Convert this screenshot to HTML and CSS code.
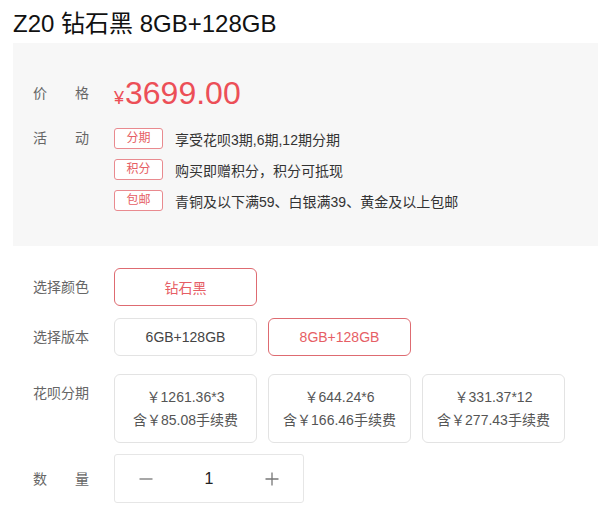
FILE: index.html
```html
<!DOCTYPE html>
<html lang="zh-CN">
<head>
  <meta charset="UTF-8" />
  <title>Z20 钻石黑 8GB+128GB</title>
  <meta name="viewport" content="width=device-width, initial-scale=1.0" />
  <link rel="stylesheet" href="styles.css">
</head>
<body>
  <div class="product">
    <h1 class="title">Z20 钻石黑 8GB+128GB</h1>

    <div class="summary">
      <div class="row price-row">
        <span class="label spread">价格</span>
        <span class="price"><em>¥</em>3699.00</span>
      </div>
      <div class="row promo-row">
        <span class="label spread">活动</span>
        <ul class="promos">
          <li><span class="tag">分期</span>享受花呗3期,6期,12期分期</li>
          <li><span class="tag">积分</span>购买即赠积分，积分可抵现</li>
          <li><span class="tag">包邮</span>青铜及以下满59、白银满39、黄金及以上包邮</li>
        </ul>
      </div>
    </div>

    <div class="options">
      <div class="row color-row">
        <span class="label">选择颜色</span>
        <div class="choices">
          <button class="choice active">钻石黑</button>
        </div>
      </div>
      <div class="row version-row">
        <span class="label">选择版本</span>
        <div class="choices">
          <button class="choice">6GB+128GB</button>
          <button class="choice active">8GB+128GB</button>
        </div>
      </div>
      <div class="row stage-row">
        <span class="label">花呗分期</span>
        <div class="choices">
          <button class="choice stage">
            <span>￥1261.36*3</span>
            <span>含￥85.08手续费</span>
          </button>
          <button class="choice stage">
            <span>￥644.24*6</span>
            <span>含￥166.46手续费</span>
          </button>
          <button class="choice stage">
            <span>￥331.37*12</span>
            <span>含￥277.43手续费</span>
          </button>
        </div>
      </div>
      <div class="row qty-row">
        <span class="label spread">数量</span>
        <div class="qty">
          <button class="qty-btn" aria-label="减少">
            <svg width="14" height="14" viewBox="0 0 14 14"><path d="M0.5 7h13" stroke="#777" stroke-width="1.3" fill="none"/></svg>
          </button>
          <span class="qty-value">1</span>
          <button class="qty-btn" aria-label="增加">
            <svg width="14" height="14" viewBox="0 0 14 14"><path d="M0.5 7h13M7 0.5v13" stroke="#777" stroke-width="1.3" fill="none"/></svg>
          </button>
        </div>
      </div>
    </div>
  </div>
</body>
</html>
```

FILE: styles.css
```css
body {
  margin: 0;
  padding: 0;
  background: #fff;
  font-family: "Liberation Sans", "Noto Sans CJK SC", sans-serif;
  color: #333;
}

.product {
  width: 616px;
}

.title {
  margin: 8px 0 3px 13px;
  font-size: 24px;
  line-height: 32px;
  font-weight: normal;
  color: #111;
}

.summary {
  margin-left: 13px;
  width: 585px;
  box-sizing: border-box;
  padding: 30px 20px 35px;
  background: #f7f7f7;
}

.row {
  display: flex;
  align-items: flex-start;
}

.label {
  flex: none;
  width: 81px;
  font-size: 14px;
  line-height: 38px;
  color: #666;
}

.label.spread {
  width: 56px;
  margin-right: 25px;
  text-align: justify;
  text-align-last: justify;
}

.price-row {
  height: 40px;
  align-items: center;
}

.price-row .label {
  line-height: 40px;
}

.price {
  font-size: 32px;
  line-height: 40px;
  color: #ec4f57;
}

.price em {
  font-style: normal;
  font-size: 18px;
  line-height: 1;
  margin-right: 1px;
}

.promo-row {
  margin-top: 15px;
}

.promo-row .label {
  line-height: 21px;
}

.promos {
  list-style: none;
  margin: 0;
  padding: 0;
  display: flex;
  flex-direction: column;
  gap: 10px;
}

.promos li {
  display: flex;
  align-items: center;
  height: 21px;
  font-size: 14px;
  color: #333;
}

.tag {
  width: 49px;
  height: 21px;
  box-sizing: border-box;
  margin-right: 12px;
  border: 1px solid #e98a8f;
  border-radius: 3px;
  background: #fff;
  color: #e65e65;
  font-size: 12px;
  line-height: 19px;
  text-align: center;
}

.options {
  padding-left: 33px;
  margin-top: 22px;
}

.version-row {
  margin-top: 12px;
}

.stage-row {
  margin-top: 18px;
}

.qty-row {
  margin-top: 11px;
  align-items: center;
}

.choices {
  display: flex;
  gap: 11px;
}

.choice {
  width: 143px;
  height: 38px;
  padding: 0;
  border: 1px solid #e3e3e3;
  border-radius: 6px;
  background: #fff;
  font-family: inherit;
  font-size: 14px;
  color: #444;
  cursor: pointer;
}

.choice.active {
  border-color: #de6b71;
  color: #e65e65;
}

.choice.stage {
  height: 69px;
  display: flex;
  flex-direction: column;
  align-items: center;
  justify-content: center;
  line-height: 23px;
  color: #555;
}

.qty {
  display: flex;
  width: 190px;
  height: 49px;
  box-sizing: border-box;
  border: 1px solid #e6e6e6;
  border-radius: 3px;
}

.qty-btn,
.qty-value {
  flex: 1;
  display: flex;
  align-items: center;
  justify-content: center;
}

.qty-btn {
  padding: 0;
  border: none;
  background: none;
  cursor: pointer;
}

.qty-value {
  font-size: 16px;
  color: #222;
}
```
